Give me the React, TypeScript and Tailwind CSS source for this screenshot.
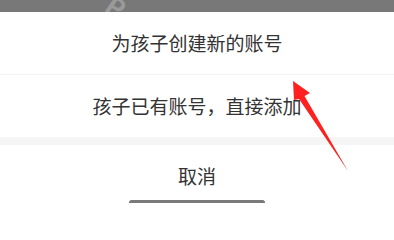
export default function App() {
  return (
    <div className="relative h-[203px] w-[394px] overflow-hidden bg-white font-['Noto_Sans_CJK_SC',sans-serif] text-[19px] text-[#333]">
      {/* dimmed page behind the sheet */}
      <div className="relative h-[12px] overflow-hidden bg-[#787878]">
        <span className="absolute left-[108px] top-[-14px] rotate-[35deg] text-[26px] font-bold text-[#9a9a9a]">P</span>
      </div>

      <div className="flex h-[62px] items-center justify-center">为孩子创建新的账号</div>
      <div className="h-[1px] bg-[#f3f3f3]" />
      <div className="flex h-[62px] items-center justify-center">孩子已有账号，直接添加</div>
      <div className="h-[8px] bg-[#f5f5f5]" />
      <div className="flex h-[62px] items-center justify-center">取消</div>

      {/* home indicator */}
      <div className="absolute left-[129px] top-[200px] h-[5px] w-[136px] rounded-full bg-[#7a7a7a]" />

      {/* annotation arrow */}
      <svg className="absolute left-0 top-0" width="394" height="203" viewBox="0 0 394 203">
        <polygon points="293,81 310,93 304.5,96 348,171 299,99 294,100" fill="#ff2020" />
      </svg>
    </div>
  )
}
